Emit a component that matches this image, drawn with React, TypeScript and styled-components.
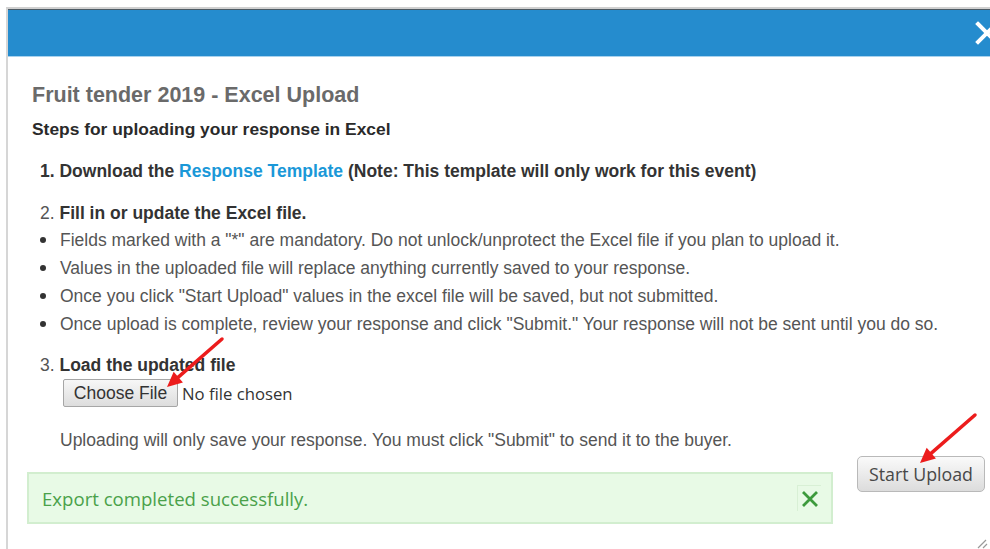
import styled, { createGlobalStyle } from "styled-components";

const GlobalStyle = createGlobalStyle`
  html, body {
    margin: 0;
    padding: 0;
    background: #fff;
    overflow: hidden;
  }
  body {
    font-family: "Liberation Sans", Arial, sans-serif;
  }
`;

const Page = styled.div`
  position: relative;
  width: 990px;
  height: 549px;
  padding-top: 7px;
  padding-left: 6px;
  box-sizing: border-box;
`;

const Dialog = styled.div`
  height: 100%;
  border-top: 2px solid #d0d0d0;
  border-left: 2px solid #d6d6d6;
  display: flex;
  flex-direction: column;
`;

const TitleBar = styled.div`
  height: 46px;
  background: #258cce;
  border-top: 1px solid #4d5a64;
  border-bottom: 1px solid #a8d2ee;
  display: flex;
  align-items: center;
  justify-content: flex-end;
  overflow: hidden;
`;

const CloseIcon = styled.svg`
  width: 24px;
  height: 24px;
  margin-right: -9px;
  flex-shrink: 0;
`;

const Body = styled.div`
  padding: 26px 0 0 24px;
`;

const Title = styled.h2`
  margin: 0;
  font-size: 21.5px;
  line-height: 24px;
  font-weight: bold;
  color: #6a6a6a;
`;

const Subtitle = styled.div`
  margin-top: 12px;
  font-size: 17.4px;
  line-height: 20px;
  font-weight: bold;
  color: #2a2a2a;
`;

const Steps = styled.div`
  padding-left: 8px;
`;

const Step = styled.div<{ $gap: number }>`
  margin-top: ${(p) => p.$gap}px;
  font-size: 17.5px;
  line-height: 20px;
  color: #555;
`;

const Strong = styled.b`
  color: #333;
`;

const Link = styled.a`
  color: #1a98d8;
  font-weight: bold;
  text-decoration: none;
`;

const Bullets = styled.ul`
  margin: 3px 0 0;
  padding: 0;
  list-style: none;
`;

const Bullet = styled.li`
  display: flex;
  font-size: 17.5px;
  line-height: 28px;
  color: #555;

  &::before {
    content: "";
    width: 6px;
    height: 6px;
    border-radius: 50%;
    background: #333;
    margin: 11px 14px 0 0;
    flex-shrink: 0;
  }
`;

const FileRow = styled.div`
  margin-top: 4px;
  padding-left: 23px;
  display: flex;
  align-items: center;
  gap: 4px;
`;

const FileButton = styled.button`
  height: 28px;
  width: 115px;
  padding: 0;
  border: 1px solid #a6a6a6;
  border-radius: 2px;
  background: linear-gradient(#f7f7f7, #dddddd);
  font-family: "Liberation Sans", Arial, sans-serif;
  font-size: 17.5px;
  color: #333;
`;

const FileName = styled.span`
  font-family: "Open Sans", sans-serif;
  font-size: 16.7px;
  color: #333;
`;

const Note = styled.div`
  margin-top: 23px;
  padding-left: 20px;
  font-size: 17.5px;
  line-height: 20px;
  color: #555;
`;

const Footer = styled.div`
  margin-top: 6px;
  padding-left: 19px;
  display: flex;
  align-items: flex-start;
`;

const Alert = styled.div`
  margin-top: 16px;
  width: 806px;
  height: 52px;
  box-sizing: border-box;
  background: #e8fae6;
  border: 2px solid #d2eecf;
  display: flex;
  align-items: center;
  justify-content: space-between;
  padding: 0 10px 0 13px;
`;

const AlertText = styled.span`
  font-family: "Open Sans", sans-serif;
  font-size: 18.6px;
  color: #4aa14a;
`;

const AlertClose = styled.span`
  width: 23px;
  height: 25px;
  border-top: 1px solid #d8f0d5;
  border-left: 1px solid #d8f0d5;
  display: flex;
  align-items: center;
  justify-content: center;
`;

const UploadButton = styled.button`
  margin-left: 24px;
  width: 128px;
  height: 36px;
  border: 1px solid #b9b9b9;
  border-radius: 5px;
  background: linear-gradient(#fafafa, #dcdcdc);
  font-family: "Open Sans", sans-serif;
  font-size: 17.8px;
  color: #484848;
  padding: 0;
`;

const Overlay = styled.svg`
  position: absolute;
  left: 0;
  top: 0;
  pointer-events: none;
`;

const Arrow = ({ x1, y1, x2, y2 }: { x1: number; y1: number; x2: number; y2: number }) => {
  const a = Math.atan2(y2 - y1, x2 - x1);
  const len = 15;
  const half = 7;
  const bx = x2 - len * Math.cos(a);
  const by = y2 - len * Math.sin(a);
  const px = -Math.sin(a) * half;
  const py = Math.cos(a) * half;
  return (
    <g>
      <line x1={x1} y1={y1} x2={bx} y2={by} stroke="#ec1c1c" strokeWidth={3.5} strokeLinecap="round" />
      <polygon points={`${x2},${y2} ${bx + px},${by + py} ${bx - px},${by - py}`} fill="#ec1c1c" />
    </g>
  );
};

export default function App() {
  return (
    <>
      <GlobalStyle />
      <Page>
        <Dialog>
          <TitleBar>
            <CloseIcon viewBox="0 0 24 24">
              <path d="M3 3 L21 21 M21 3 L3 21" stroke="#fff" strokeWidth={4} strokeLinecap="square" />
            </CloseIcon>
          </TitleBar>
          <Body>
            <Title>Fruit tender 2019 - Excel Upload</Title>
            <Subtitle>Steps for uploading your response in Excel</Subtitle>
            <Steps>
              <Step $gap={22}>
                <Strong>
                  1. Download the <Link href="#">Response Template</Link> (Note: This template will only work for this event)
                </Strong>
              </Step>
              <Step $gap={22}>
                2. <Strong>Fill in or update the Excel file.</Strong>
              </Step>
              <Bullets>
                <Bullet>Fields marked with a "*" are mandatory. Do not unlock/unprotect the Excel file if you plan to upload it.</Bullet>
                <Bullet>Values in the uploaded file will replace anything currently saved to your response.</Bullet>
                <Bullet>Once you click "Start Upload" values in the excel file will be saved, but not submitted.</Bullet>
                <Bullet>Once upload is complete, review your response and click "Submit." Your response will not be sent until you do so.</Bullet>
              </Bullets>
              <Step $gap={17}>
                3. <Strong>Load the updated file</Strong>
              </Step>
              <FileRow>
                <FileButton>Choose File</FileButton>
                <FileName>No file chosen</FileName>
              </FileRow>
              <Note>Uploading will only save your response. You must click "Submit" to send it to the buyer.</Note>
            </Steps>
          </Body>
          <Footer>
            <Alert>
              <AlertText>Export completed successfully.</AlertText>
              <AlertClose>
                <svg width="18" height="18" viewBox="0 0 18 18">
                  <path d="M2 2 L16 16 M16 2 L2 16" stroke="#3c9a3c" strokeWidth={2.8} />
                </svg>
              </AlertClose>
            </Alert>
            <UploadButton>Start Upload</UploadButton>
          </Footer>
        </Dialog>
        <Overlay width={990} height={549} viewBox="0 0 990 549">
          <Arrow x1={222} y1={339} x2={167} y2={387} />
          <Arrow x1={975} y1={415} x2={920} y2={463} />
          <path d="M978 548 L986 540 M983 548 L987 544" stroke="#999" strokeWidth={1.2} />
        </Overlay>
      </Page>
    </>
  );
}
